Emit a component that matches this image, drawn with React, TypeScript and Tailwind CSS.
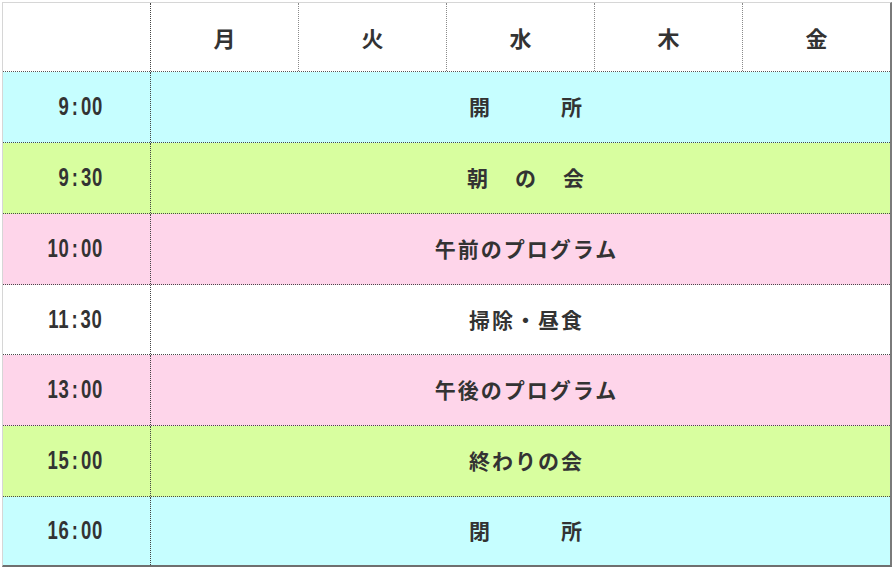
import React from "react";

const jp = { fontFamily: '"Noto Sans CJK JP", "Noto Sans", sans-serif' };
const num = { fontFamily: '"Liberation Sans", "Noto Sans", sans-serif' };

type Row = { time: string; words: string[]; gap: string; bg: string; h: string };

const rows: Row[] = [
  { time: "9:00", words: ["開", "所"], gap: "gap-[69px]", bg: "bg-[#c6feff]", h: "h-[71px]" },
  { time: "9:30", words: ["朝", "の", "会"], gap: "gap-[25px]", bg: "bg-[#d8fe9f]", h: "h-[71px]" },
  { time: "10:00", words: ["午前のプログラム"], gap: "gap-0", bg: "bg-[#fed5ea]", h: "h-[71px]" },
  { time: "11:30", words: ["掃除・昼食"], gap: "gap-0", bg: "bg-white", h: "h-[70px]" },
  { time: "13:00", words: ["午後のプログラム"], gap: "gap-0", bg: "bg-[#fed5ea]", h: "h-[71px]" },
  { time: "15:00", words: ["終わりの会"], gap: "gap-0", bg: "bg-[#d8fe9f]", h: "h-[71px]" },
  { time: "16:00", words: ["閉", "所"], gap: "gap-[69px]", bg: "bg-[#c6feff]", h: "flex-1" },
];

const days = ["月", "火", "水", "木", "金"];

export default function App() {
  return (
    <div className="w-[893px] h-[569px] bg-white relative">
      <div className="absolute left-[2px] top-[2px] w-[890px] h-[565px] border-t border-l border-t-[#d6d6d6] border-l-[#d6d6d6] border-r-2 border-b-2 border-r-[#7a7a7a] border-b-[#6f6f6f] flex flex-col text-[#333333]">
        {/* header */}
        <div className="flex h-[69px] border-b border-dotted border-b-[#555555] bg-white shrink-0">
          <div className="w-[148px] border-r border-dotted border-r-[#444444] shrink-0" />
          {days.map((d, i) => (
            <div
              key={d}
              className={
                "flex items-center justify-center font-bold text-[22px] " +
                (i < 4 ? "w-[148px] border-r border-dotted border-r-[#8a8a8a] shrink-0" : "flex-1")
              }
              style={jp}
            >
              {d}
            </div>
          ))}
        </div>
        {rows.map((r, idx) => {
          const [hh, mm] = r.time.split(":");
          return (
            <div
              key={r.time}
              className={
                "flex shrink-0 " +
                r.h +
                " " +
                r.bg +
                (idx < rows.length - 1 ? " border-b border-dotted border-b-[#4a4a4a]" : "")
              }
            >
              <div className="w-[148px] shrink-0 border-r border-dotted border-r-[#444444] flex items-center justify-end pr-[47px]">
                <span
                  className="inline-block font-bold text-[25px] tracking-[1px] scale-x-[0.74] origin-right whitespace-nowrap"
                  style={num}
                >
                  {hh}
                  <span className="mx-[3px]">:</span>
                  {mm}
                </span>
              </div>
              <div
                className={"flex-1 flex items-center justify-center pl-[12px] font-bold text-[21px] tracking-[2px] " + r.gap}
                style={jp}
              >
                {r.words.map((w, i) => (
                  <span key={i}>{w}</span>
                ))}
              </div>
            </div>
          );
        })}
      </div>
    </div>
  );
}
